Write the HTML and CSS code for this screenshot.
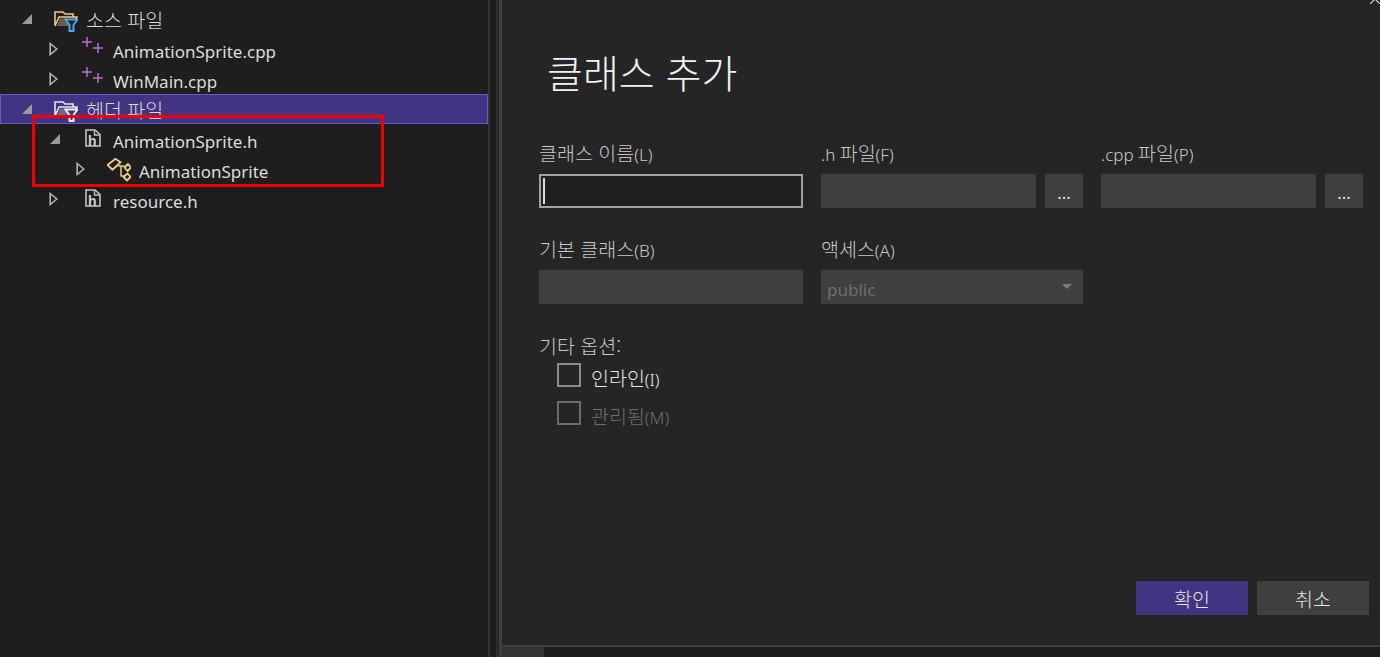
FILE: index.html
```html
<!DOCTYPE html>
<html lang="ko">
<head>
    <meta charset="UTF-8">
    <title>클래스 추가</title>
    <link rel="stylesheet" href="styles.css">
</head>
<body>
    <svg class="defs" width="0" height="0">
        <defs>
            <symbol id="arrow-open" viewBox="0 0 12 12"><path d="M1 11 L11 1 V11 Z" fill="#9a9a9a"/></symbol>
            <symbol id="arrow-closed" viewBox="0 0 9 14"><path d="M1.2 1.5 L7.8 7 L1.2 12.5 Z" fill="none" stroke="#b4b4b4" stroke-width="1.6"/></symbol>
            <symbol id="cpp" viewBox="0 0 24 20">
                <path d="M6 1 V11 M1 6 H11 M17 7 V17 M12 12 H22" fill="none" stroke="#b46fcf" stroke-width="1.5"/>
            </symbol>
            <symbol id="file-h" viewBox="0 0 16 18">
                <path d="M1 1 H10 L15 5.500 V17 H1 Z" fill="none" stroke="#c4c4c4" stroke-width="1.6"/>
                <path d="M9.500 1.500 V6 H14.500" fill="none" stroke="#c4c4c4" stroke-width="1.3"/>
            </symbol>
            <symbol id="class" viewBox="3 3 24 24">
                <g fill="none" stroke="#e8c98a" stroke-width="1.9" stroke-linejoin="round">
                    <path d="M3.500 10 L11.500 3.800 L16.500 7.200 L8.500 14.800 Z"/>
                    <path d="M24 9 L27 12.500 L23.500 16 L20.500 12.500 Z"/>
                    <path d="M23.500 18.500 L26.500 22 L23 25.500 L19.500 22 Z"/>
                    <path d="M14 11 H20.500 M17 11 V21 H20" stroke-width="1.5"/>
                </g>
            </symbol>
        </defs>
    </svg>

    <div class="layout">
        <div class="tree">
            <div class="row level-0">
                <svg class="arrow arrow-open"><use href="#arrow-open"/></svg>
                <svg class="icon folder" viewBox="0 0 24 22">
                    <path d="M1 15 V2 H9 L11 4 H19 V7 M1 16 L5 7 H23 L20 12" fill="none" stroke="#e8c98a" stroke-width="1.6"/>
                    <path d="M3 16 L6 8.500 H21 L14 16 Z" fill="#6b5f45"/>
                    <path d="M11.500 9.500 H23.500 L19.500 15 V21 H15.500 V15 Z" fill="#252526" stroke="#4ea3ea" stroke-width="2"/>
                </svg>
                <span class="name ko">소스 파일</span>
            </div>
            <div class="row level-1">
                <svg class="arrow arrow-closed"><use href="#arrow-closed"/></svg>
                <svg class="icon cpp"><use href="#cpp"/></svg>
                <span class="name">AnimationSprite.cpp</span>
            </div>
            <div class="row level-1">
                <svg class="arrow arrow-closed"><use href="#arrow-closed"/></svg>
                <svg class="icon cpp"><use href="#cpp"/></svg>
                <span class="name">WinMain.cpp</span>
            </div>
            <div class="row level-0 selected">
                <svg class="arrow arrow-open"><use href="#arrow-open"/></svg>
                <svg class="icon folder" viewBox="0 0 24 22">
                    <path d="M1 15 V2 H9 L11 4 H19 V7 M1 16 L5 7 H23 L20 12" fill="none" stroke="#e6e6e6" stroke-width="1.6"/>
                    <path d="M3 16 L6 8.500 H21 L14 16 Z" fill="#6f6a94"/>
                    <path d="M11.500 9.500 H23.500 L19.500 15 V21 H15.500 V15 Z" fill="#433483" stroke="#efefef" stroke-width="2"/>
                </svg>
                <span class="name ko">헤더 파일</span>
            </div>
            <div class="row level-1">
                <svg class="arrow arrow-open"><use href="#arrow-open"/></svg>
                <span class="icon file">
                    <svg class="file-outline"><use href="#file-h"/></svg>
                    <span class="file-letter">h</span>
                </span>
                <span class="name">AnimationSprite.h</span>
            </div>
            <div class="row level-2">
                <svg class="arrow arrow-closed"><use href="#arrow-closed"/></svg>
                <svg class="icon class-icon"><use href="#class"/></svg>
                <span class="name">AnimationSprite</span>
            </div>
            <div class="row level-1">
                <svg class="arrow arrow-closed"><use href="#arrow-closed"/></svg>
                <span class="icon file">
                    <svg class="file-outline"><use href="#file-h"/></svg>
                    <span class="file-letter">h</span>
                </span>
                <span class="name">resource.h</span>
            </div>
            <div class="red-box"></div>
        </div>

        <div class="splitter"></div>

        <div class="dialog-wrap">
            <div class="dialog">
                <svg class="close" width="12" height="6" viewBox="0 0 12 6"><path d="M0 6 L5 1 L10 6" fill="none" stroke="#d0d0d0" stroke-width="1.2"/></svg>
                <h1>클래스 추가</h1>
                <div class="form">
                    <div class="field col-name">
                        <label><span class="ko">클래스 이름</span>(L)</label>
                        <div class="input active"><span class="caret"></span></div>
                    </div>
                    <div class="field col-h">
                        <label>.h <span class="ko">파일</span>(F)</label>
                        <div class="input"></div>
                    </div>
                    <div class="browse col-h-btn">...</div>
                    <div class="field col-cpp">
                        <label>.cpp <span class="ko">파일</span>(P)</label>
                        <div class="input"></div>
                    </div>
                    <div class="browse col-cpp-btn">...</div>

                    <div class="field col-name">
                        <label><span class="ko">기본 클래스</span>(B)</label>
                        <div class="input"></div>
                    </div>
                    <div class="field col-access">
                        <label><span class="ko">액세스</span>(A)</label>
                        <div class="input select">
                            <span>public</span>
                            <span class="caret-down"></span>
                        </div>
                    </div>
                </div>
                <div class="options">
                    <div class="options-title"><span class="ko">기타 옵션:</span></div>
                    <div class="check"><span class="box"></span><span class="check-text"><span class="ko">인라인</span>(I)</span></div>
                    <div class="check disabled"><span class="box"></span><span class="check-text"><span class="ko">관리됨</span>(M)</span></div>
                </div>
                <div class="buttons">
                    <button class="primary ko">확인</button>
                    <button class="ko">취소</button>
                </div>
            </div>
            <div class="hscroll"><div class="thumb"></div></div>
        </div>
    </div>
</body>
</html>
```

FILE: styles.css
```css
* {
    box-sizing: border-box;
}
html, body {
    margin: 0;
    height: 100%;
    overflow: hidden;
}
body {
    background-color: #1e1e1e;
    color: #dcdcdc;
    font-family: 'Noto Sans', 'Noto Sans CJK KR', sans-serif;
    font-size: 17px;
}
.ko {
    font-family: 'Noto Sans CJK KR', sans-serif;
    font-size: 19.5px;
    font-weight: 300;
}
.defs {
    display: block;
    height: 0;
}
.layout {
    display: flex;
    height: 657px;
}

/* solution tree */
.tree {
    position: relative;
    width: 488px;
    flex: none;
    padding-top: 4px;
}
.row {
    display: flex;
    align-items: center;
    height: 30px;
}
.level-0 { padding-left: 21px; }
.level-1 { padding-left: 49px; }
.level-2 { padding-left: 76px; }
.selected {
    background-color: #433483;
    border: 1px solid #6a54c8;
    padding-left: 20px;
}
.arrow {
    flex: none;
}
.arrow-open {
    width: 12px;
    height: 12px;
    margin-right: 21px;
}
.arrow-closed {
    width: 9px;
    height: 14px;
    margin-right: 23px;
}
.level-1 .arrow-open {
    margin-right: 23px;
}
.icon {
    flex: none;
}
.folder {
    width: 24px;
    height: 22px;
    margin-right: 8px;
    margin-top: 3px;
}
.cpp {
    width: 24px;
    height: 20px;
    margin-right: 8px;
    margin-top: -6px;
}
.file {
    position: relative;
    width: 16px;
    height: 18px;
    margin-left: 1px;
    margin-right: 12px;
    margin-top: -2px;
}
.arrow-closed + .file {
    margin-left: 4px;
}
.file-outline {
    display: block;
    width: 16px;
    height: 18px;
}
.file-letter {
    position: absolute;
    left: 3px;
    top: 2px;
    font: bold 14px/21px 'Liberation Sans', sans-serif;
    color: #d0d0d0;
}
.class-icon {
    width: 24px;
    height: 24px;
    margin-left: -1px;
    margin-right: 8px;
    margin-top: 2px;
    overflow: visible;
}
.name {
    white-space: nowrap;
    line-height: 30px;
    padding-top: 6px;
}
.name.ko {
    padding-top: 2px;
}
.red-box {
    position: absolute;
    left: 32px;
    top: 115px;
    width: 352px;
    height: 72px;
    border: 3px solid #f00000;
}

/* split bars */
.splitter {
    width: 11px;
    flex: none;
    background: linear-gradient(to right, #333 0 2px, #1e1e1e 2px 8px, #2e2e2e 8px 10px, #1e1e1e 10px);
}

/* dialog */
.dialog-wrap {
    flex: 1;
    display: flex;
    flex-direction: column;
    border-left: 3px solid #3f3f40;
    min-width: 0;
}
.dialog {
    position: relative;
    height: 647px;
    background-color: #252526;
    border-bottom: 2px solid #3f3f40;
    padding: 43px 0 0 37px;
    color: #c8c8c8;
}
.close {
    position: absolute;
    right: -2px;
    top: -2px;
}
h1 {
    margin: 0 0 0 8px;
    font-size: 39px;
    font-weight: 300;
    line-height: 56px;
    color: #f1f1f1;
    font-family: 'Noto Sans CJK KR', sans-serif;
}
.form {
    display: grid;
    grid-template-columns: 264px 215px 38px 215px 38px;
    column-gap: 18px;
    row-gap: 27px;
    margin-top: 40px;
}
.col-name { grid-column: 1; }
.col-h { grid-column: 2; }
.col-h-btn { grid-column: 3; margin-left: -9px; margin-right: 9px; }
.col-cpp { grid-column: 4; margin-left: -9px; margin-right: 9px; }
.col-cpp-btn { grid-column: 5; margin-left: -18px; margin-right: 18px; }
.col-access { grid-column: 2 / span 2; margin-right: 9px; }
.field label {
    display: block;
    height: 35px;
    line-height: 28px;
    font-weight: 300;
}
.input {
    height: 34px;
    background-color: #3f3f40;
}
.input.active {
    background-color: #1f1f1f;
    border: 2px solid #a0a0a0;
    padding: 2px 0 0 2px;
}
.caret {
    display: block;
    width: 2px;
    height: 26px;
    background-color: #dcdcdc;
}
.select {
    display: flex;
    align-items: center;
    justify-content: space-between;
    padding: 4px 11px 0 6px;
    color: #6d6d6d;
    font-weight: 400;
}
.caret-down {
    width: 0;
    height: 0;
    border-left: 5px solid transparent;
    border-right: 5px solid transparent;
    border-top: 5px solid #7c7c7c;
    margin-top: -5px;
}
.browse {
    align-self: end;
    height: 34px;
    background-color: #3f3f40;
    text-align: center;
    line-height: 38px;
    color: #e0e0e0;
}
.options {
    margin-top: 27px;
}
.options-title {
    height: 32px;
    line-height: 30px;
}
.check {
    display: flex;
    align-items: center;
    gap: 10px;
    height: 24px;
    margin: 0 0 14px 18px;
    color: #e6e6e6;
}
.check-text {
    padding-top: 4px;
    font-weight: 300;
}
.box {
    width: 24px;
    height: 24px;
    border: 2px solid #8c8c8c;
}
.disabled {
    color: #6d6d6d;
}
.disabled .box {
    border-color: #6a6a6a;
}
.buttons {
    position: absolute;
    right: 11px;
    bottom: 30px;
    display: flex;
    gap: 9px;
}
button {
    width: 112px;
    height: 34px;
    padding: 0;
    border: none;
    background-color: #3f3f40;
    color: #e6e6e6;
    font: inherit;
}
button.ko {
    font-family: 'Noto Sans CJK KR', sans-serif;
    font-size: 19.5px;
    font-weight: 300;
}
button.primary {
    background-color: #433483;
}
.hscroll {
    flex: 1;
    background-color: #1e1e1e;
}
.thumb {
    width: 42px;
    height: 100%;
    background-color: #333334;
}
```
